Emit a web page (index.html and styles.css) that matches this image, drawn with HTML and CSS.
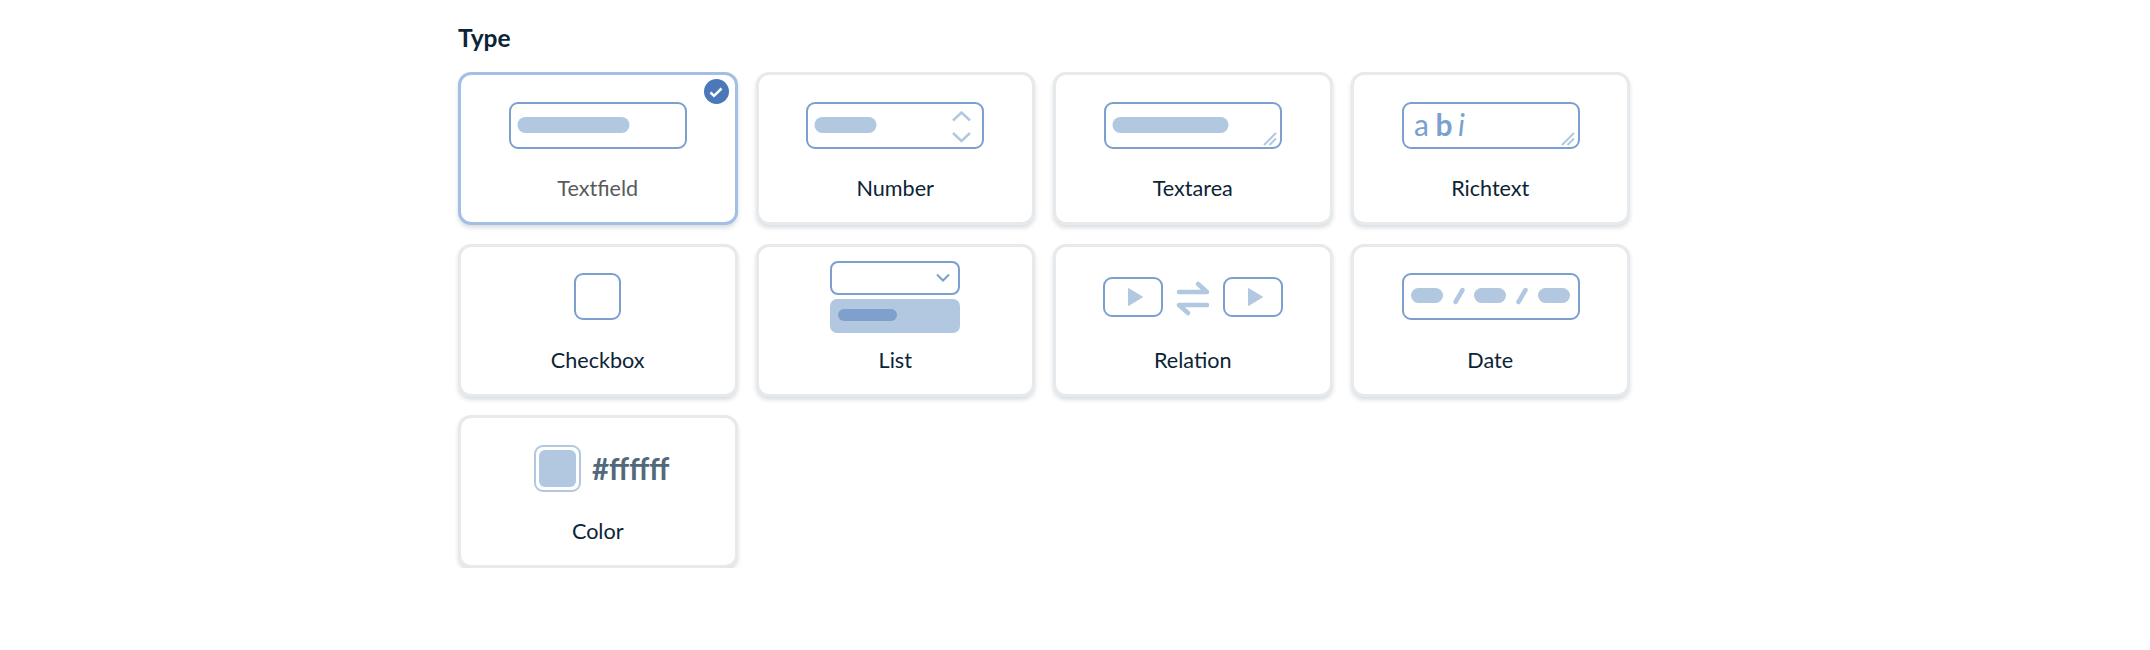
FILE: index.html
```html
<!DOCTYPE html>
<html lang="en">
<head>
<meta charset="utf-8">
<title>Type</title>
<link rel="stylesheet" href="styles.css">
</head>
<body>
<main class="field">
  <h2 class="title">Type</h2>
  <div class="grid">
    <button class="card selected">
      <span class="check"><svg width="14" height="14" viewBox="0 0 14 14"><path d="M1.500 7.500 5 10.800 12.500 3.500" fill="none" stroke="#fff" stroke-width="2.500"/></svg></span>
      <span class="art"><svg width="178" height="47" viewBox="0 0 178 47"><rect x="1" y="1" width="176" height="45" rx="8" class="box"/><rect x="8.500" y="15" width="112" height="16" rx="8" class="fill"/></svg></span>
      <span class="label">Textfield</span>
    </button>
    <button class="card">
      <span class="art"><svg width="178" height="47" viewBox="0 0 178 47"><rect x="1" y="1" width="176" height="45" rx="8" class="box"/><rect x="8.500" y="15" width="62" height="16" rx="8" class="fill"/><path d="M147 18.500 155.500 10.500 164 18.500M147 31 155.500 39 164 31" class="soft wide"/></svg></span>
      <span class="label">Number</span>
    </button>
    <button class="card">
      <span class="art"><svg width="178" height="47" viewBox="0 0 178 47"><rect x="1" y="1" width="176" height="45" rx="8" class="box"/><rect x="8.500" y="15" width="116" height="16" rx="8" class="fill"/><path d="M160 43 172 31M165.500 43 172 36.500" class="soft"/></svg></span>
      <span class="label">Textarea</span>
    </button>
    <button class="card">
      <span class="art"><svg width="178" height="47" viewBox="0 0 178 47"><rect x="1" y="1" width="176" height="45" rx="8" class="box"/><text x="12" y="34" class="rt">a</text><text x="33.500" y="34" class="rt bold">b</text><text x="56" y="34" class="rt ital">i</text><path d="M160 43 172 31M165.500 43 172 36.500" class="soft"/></svg></span>
      <span class="label">Richtext</span>
    </button>
    <button class="card">
      <span class="art"><svg width="47" height="47" viewBox="0 0 47 47"><rect x="1" y="1" width="45" height="45" rx="8" class="box"/></svg></span>
      <span class="label">Checkbox</span>
    </button>
    <button class="card">
      <span class="art art-list"><svg width="130" height="72" viewBox="0 0 130 72"><rect x="1" y="1" width="128" height="32" rx="7" class="box"/><path d="M107 13.500l6 6 6-6" class="line"/><rect y="38" width="130" height="34" rx="7" class="fill"/><rect x="8" y="48" width="59" height="12" rx="6" fill="#7f9fcc"/></svg></span>
      <span class="label">List</span>
    </button>
    <button class="card">
      <span class="art"><svg width="180" height="40" viewBox="0 0 180 40"><rect x="1" y="1" width="58" height="38" rx="8" class="box"/><path d="M25.500 11.500 39.500 20 25.500 28.500Z" class="tri"/><path d="M76 15h28l-9-8M104 28H76l9 8" class="soft heavy"/><rect x="121" y="1" width="58" height="38" rx="8" class="box"/><path d="M145.500 11.500 159.500 20 145.500 28.500Z" class="tri"/></svg></span>
      <span class="label">Relation</span>
    </button>
    <button class="card">
      <span class="art"><svg width="178" height="47" viewBox="0 0 178 47"><rect x="1" y="1" width="176" height="45" rx="8" class="box"/><rect x="9" y="15" width="32" height="15" rx="7.500" class="fill"/><path d="M53.500 29 60.500 17" class="soft heavy"/><rect x="72" y="15" width="32" height="15" rx="7.500" class="fill"/><path d="M116.500 29 123.500 17" class="soft heavy"/><rect x="136" y="15" width="32" height="15" rx="7.500" class="fill"/></svg></span>
      <span class="label">Date</span>
    </button>
    <button class="card">
      <span class="art art-color"><span class="swatch"><span class="swatch-in"></span></span><span class="hex">#ffffff</span></span>
      <span class="label">Color</span>
    </button>
  </div>
</main>
</body>
</html>
```
FILE: styles.css
```css
* { box-sizing: border-box; }
html, body { margin: 0; background: #fff; }
body { font-family: Lato, "Liberation Sans", sans-serif; color: #0b2436; }
.field { width: 1172px; margin-left: 458px; padding-top: 24px; }
.title { margin: 0 0 20px; font-size: 24.500px; line-height: 28px; font-weight: 700; color: #0b2436; }
.grid { display: grid; grid-template-columns: repeat(4, 1fr); grid-auto-rows: 153px; gap: 18.500px 18px; }
.card { position: relative; display: flex; flex-direction: column; align-items: center; padding: 0; background: #fff; border: 3px solid #e6eaec; border-radius: 13px; box-shadow: 0 3px 4px rgba(11, 36, 54, .15); font: inherit; color: inherit; }
.card:nth-child(4n) .art { margin-left: 2px; }
.card.selected { border-color: #a3c0e4; }
.card.selected .label { color: #5a5a5a; }
.art { height: 95px; display: flex; align-items: center; justify-content: center; padding-top: 5px; flex: none; }
.art-list { padding-top: 6px; }
.label { font-size: 21.600px; line-height: 24px; margin-top: 6px; }
.box { fill: #fff; stroke: #7b9fcf; stroke-width: 2; }
.fill { fill: #b2c8e1; }
.tri { fill: #b2c8e1; stroke: #b2c8e1; stroke-width: 1; stroke-linejoin: round; }
.line { fill: none; stroke: #7b9fcf; stroke-width: 2; }
.soft { fill: none; stroke: #b2c8e1; stroke-width: 2; }
.soft.wide { stroke-width: 2.500; }
.soft.heavy { stroke-width: 4.500; stroke-linecap: round; stroke-linejoin: round; }
.rt { font-family: Lato, sans-serif; font-size: 30px; fill: #7b9fcf; }
.bold { font-weight: 700; }
.ital { font-style: italic; }
.check { position: absolute; top: 4px; right: 6px; width: 25px; height: 25px; border-radius: 50%; background: #4a78b8; display: flex; align-items: center; justify-content: center; }
.art-color { gap: 11px; margin-left: 8px; }
.swatch { width: 47px; height: 47px; padding: 3px; border: 2px solid #b2c8e1; border-radius: 9px; background: #fff; }
.swatch-in { display: block; width: 100%; height: 100%; background: #b2c8e1; border-radius: 6px; }
.hex { font-size: 29.500px; font-weight: 700; color: #53697a; line-height: 34px; padding-top: 2px; }
```
